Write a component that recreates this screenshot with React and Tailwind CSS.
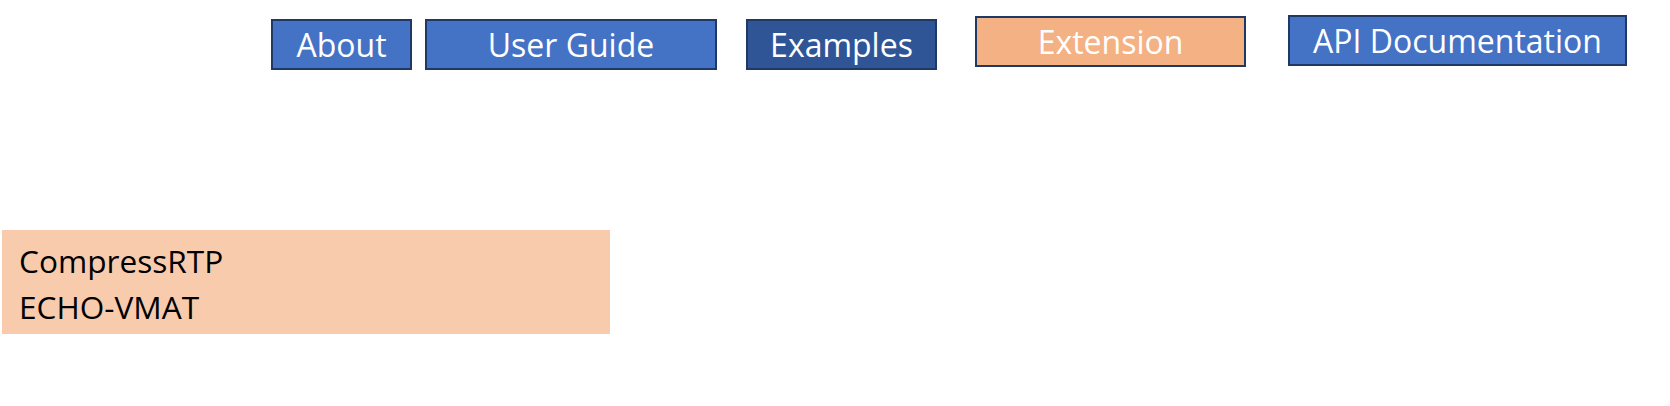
import React from 'react';

const navItems = [
  { label: 'About', className: 'ml-[271px] mt-[19px] w-[141px] bg-[#4472c4]' },
  { label: 'User Guide', className: 'ml-[13px] mt-[19px] w-[292px] bg-[#4472c4]' },
  { label: 'Examples', className: 'ml-[29px] mt-[19px] w-[191px] bg-[#2f5597]' },
  { label: 'Extension', className: 'ml-[38px] mt-[16px] w-[271px] bg-[#f4b183]' },
  { label: 'API Documentation', className: 'ml-[42px] mt-[15px] w-[339px] bg-[#4472c4]' },
];

export default function App() {
  return (
    <div
      className="w-[1670px] h-[406px] bg-white"
      style={{ fontFamily: '"Open Sans", "Noto Sans", sans-serif' }}
    >
      {/* Навигация */}
      <div className="flex items-start h-[230px]">
        {navItems.map((item) => (
          <div
            key={item.label}
            className={`${item.className} h-[51px] border-2 border-[#1f3864] flex items-center justify-center text-white text-[32px] leading-none`}
          >
            {item.label}
          </div>
        ))}
      </div>

      {/* Блок расширений */}
      <div className="ml-[2px] w-[608px] h-[104px] bg-[#f8cbad] pl-[17px] pt-[8px] text-black text-[31.6px] leading-[46px]">
        <div>CompressRTP</div>
        <div>ECHO-VMAT</div>
      </div>
    </div>
  );
}
